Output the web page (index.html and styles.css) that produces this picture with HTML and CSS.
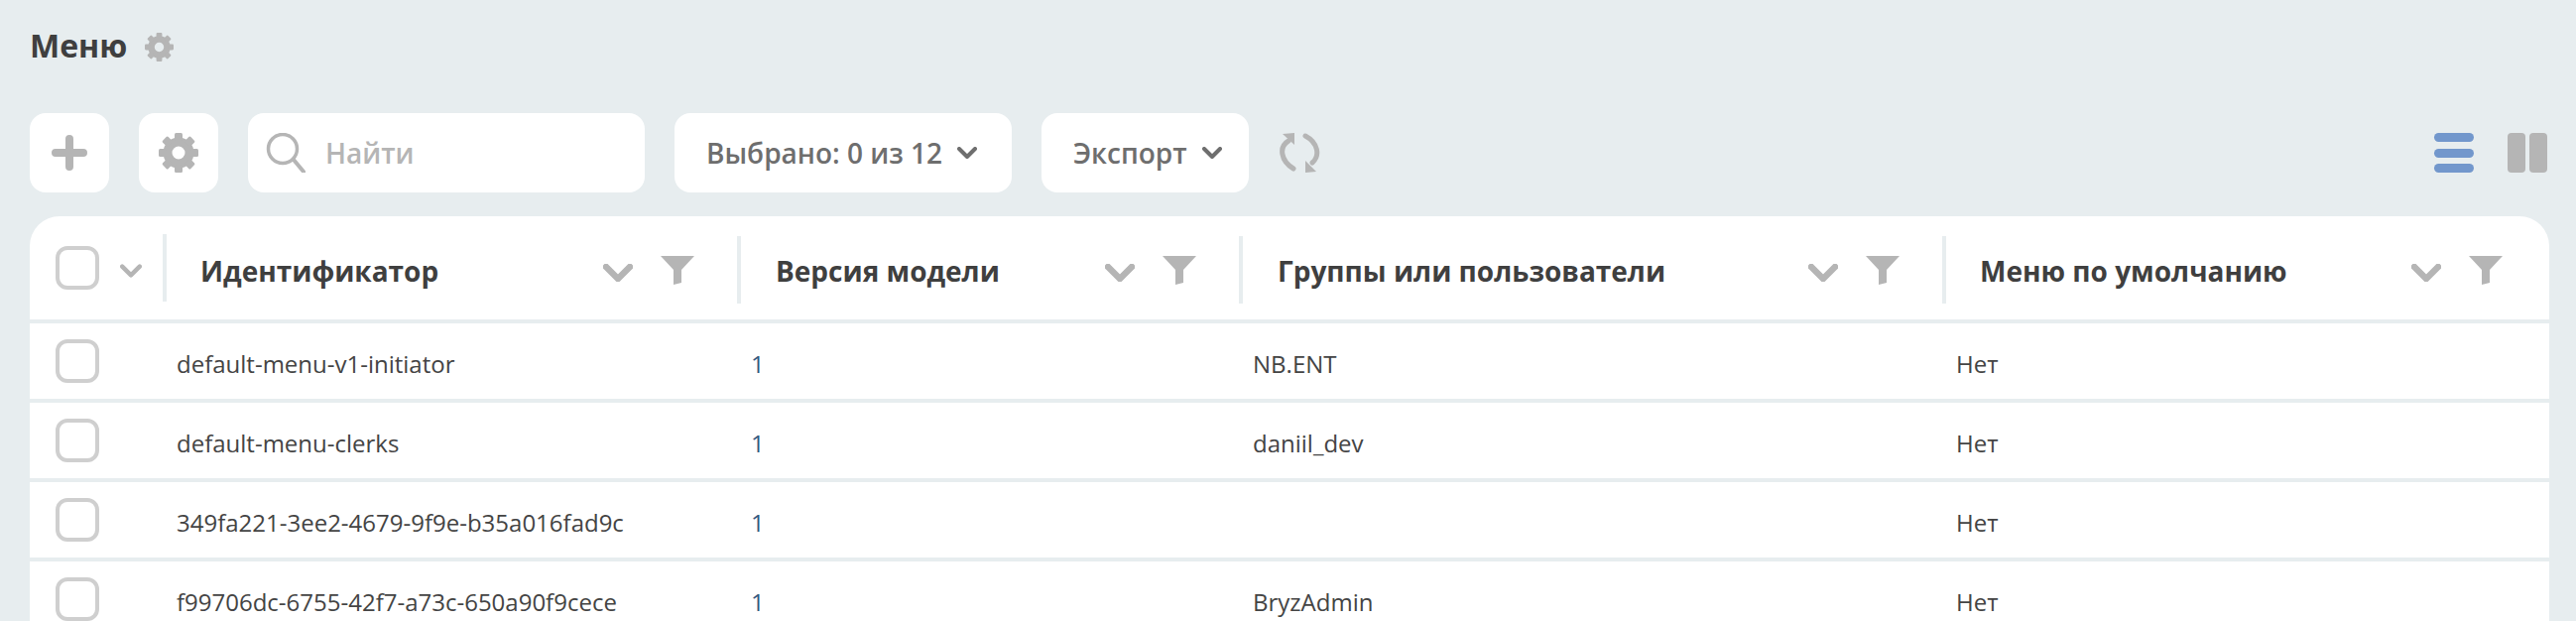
FILE: index.html
```html
<!DOCTYPE html>
<html>

<head>
    <title>Меню</title>
    <link rel="stylesheet" href="styles.css">
</head>

<body>
    <svg class="defs" width="0" height="0">
        <defs>
            <symbol id="gear" viewBox="0 0 40 40">
                <circle cx="20" cy="20" r="11" fill="none" stroke="currentColor" stroke-width="9" />
                <g id="tooth-pair">
                    <rect x="16" y="0" width="8" height="8" rx="1.5" fill="currentColor" />
                    <rect x="16" y="32" width="8" height="8" rx="1.5" fill="currentColor" />
                </g>
                <use href="#tooth-pair" transform="rotate(45 20 20)" />
                <use href="#tooth-pair" transform="rotate(90 20 20)" />
                <use href="#tooth-pair" transform="rotate(135 20 20)" />
            </symbol>
            <symbol id="chevron" viewBox="0 0 30 18">
                <path d="M3 3l12 12L27 3" fill="none" stroke="currentColor" stroke-linecap="round" stroke-linejoin="round" />
            </symbol>
            <symbol id="filter" viewBox="0 0 34 29">
                <path d="M0 0h34L21 14v13l-8 2V14z" fill="currentColor" />
            </symbol>
        </defs>
    </svg>

    <h1 class="page-title">Меню <svg class="title-gear"><use href="#gear" /></svg></h1>

    <div class="toolbar">
        <button class="tool-btn">
            <svg class="icon" viewBox="0 0 40 40">
                <path d="M20 6v28M6 20h28" stroke="currentColor" stroke-width="8" stroke-linecap="round" />
            </svg>
        </button>
        <button class="tool-btn">
            <svg class="icon"><use href="#gear" /></svg>
        </button>
        <div class="search">
            <svg class="icon" viewBox="0 0 40 40">
                <circle cx="17" cy="16" r="14.5" fill="none" stroke="currentColor" stroke-width="3.5" />
                <path d="M28 27l10 12" stroke="currentColor" stroke-width="4" stroke-linecap="round" />
            </svg>
            <span class="search-text">Найти</span>
        </div>
        <button class="drop-btn selected-btn">Выбрано: 0 из 12 <svg class="drop-chevron"><use href="#chevron" /></svg></button>
        <button class="drop-btn export-btn">Экспорт <svg class="drop-chevron"><use href="#chevron" /></svg></button>
        <svg class="icon refresh" viewBox="0 0 42 40">
            <path d="M15 36C2 28 0 14 10 8" fill="none" stroke="currentColor" stroke-width="5" stroke-linecap="round" />
            <path d="M4 1l12-1v12z" fill="currentColor" />
            <path d="M27 3c13 7 15 20 7 27" fill="none" stroke="currentColor" stroke-width="5" stroke-linecap="round" />
            <path d="M27 28v12l11-1z" fill="currentColor" />
        </svg>
        <div class="view-switch">
            <div class="view-list">
                <span></span>
                <span></span>
                <span></span>
            </div>
            <div class="view-columns">
                <span></span>
                <span></span>
            </div>
        </div>
    </div>

    <div class="table">
        <div class="row head">
            <div class="check-cell">
                <span class="checkbox"></span>
                <svg class="head-caret"><use href="#chevron" /></svg>
            </div>
            <div class="head-cell first">
                <span class="head-name">Идентификатор</span>
                <svg class="sort"><use href="#chevron" /></svg>
                <svg class="filter"><use href="#filter" /></svg>
            </div>
            <div class="head-cell">
                <span class="head-name">Версия модели</span>
                <svg class="sort"><use href="#chevron" /></svg>
                <svg class="filter"><use href="#filter" /></svg>
            </div>
            <div class="head-cell">
                <span class="head-name">Группы или пользователи</span>
                <svg class="sort"><use href="#chevron" /></svg>
                <svg class="filter"><use href="#filter" /></svg>
            </div>
            <div class="head-cell last">
                <span class="head-name">Меню по умолчанию</span>
                <svg class="sort"><use href="#chevron" /></svg>
                <svg class="filter"><use href="#filter" /></svg>
            </div>
        </div>
        <div class="row">
            <div class="check-cell"><span class="checkbox"></span></div>
            <div class="cell">default-menu-v1-initiator</div>
            <div class="cell num">1</div>
            <div class="cell">NB.ENT</div>
            <div class="cell">Нет</div>
        </div>
        <div class="row">
            <div class="check-cell"><span class="checkbox"></span></div>
            <div class="cell">default-menu-clerks</div>
            <div class="cell num">1</div>
            <div class="cell">daniil_dev</div>
            <div class="cell">Нет</div>
        </div>
        <div class="row">
            <div class="check-cell"><span class="checkbox"></span></div>
            <div class="cell">349fa221-3ee2-4679-9f9e-b35a016fad9c</div>
            <div class="cell num">1</div>
            <div class="cell"></div>
            <div class="cell">Нет</div>
        </div>
        <div class="row">
            <div class="check-cell"><span class="checkbox"></span></div>
            <div class="cell">f99706dc-6755-42f7-a73c-650a90f9cece</div>
            <div class="cell num">1</div>
            <div class="cell">BryzAdmin</div>
            <div class="cell">Нет</div>
        </div>
    </div>
</body>

</html>
```

FILE: styles.css
```css
html,
body {
    height: 100%;
    overflow: hidden;
}

body {
    margin: 0;
    padding: 0 27px 0 30px;
    box-sizing: border-box;
    background-color: #e7edef;
    color: #3f3f3f;
    font-family: 'Open Sans', sans-serif;
}

.defs {
    position: absolute;
}

.page-title {
    display: flex;
    align-items: center;
    gap: 18px;
    height: 28px;
    margin: 0;
    padding: 32px 0 54px;
    font-size: 32px;
    font-weight: 700;
    line-height: 28px;
}

.title-gear {
    width: 29px;
    height: 29px;
    margin-top: 2px;
    color: #b5b5b5;
}

.toolbar {
    display: flex;
    align-items: center;
    height: 80px;
    margin-bottom: 24px;
}

.toolbar button {
    border: 0;
    padding: 0;
    font-family: inherit;
    cursor: pointer;
}

.icon {
    width: 40px;
    height: 40px;
    color: #b5b5b5;
    flex-shrink: 0;
}

.tool-btn,
.search,
.drop-btn {
    height: 80px;
    border-radius: 16px;
    background-color: #fff;
    display: flex;
    align-items: center;
}

.tool-btn {
    width: 80px;
    justify-content: center;
    margin-right: 30px;
}

.search {
    width: 400px;
    box-sizing: border-box;
    padding-left: 18px;
    margin-right: 30px;
    gap: 20px;
}

.search-text {
    color: #b5b5b5;
    font-size: 28px;
    font-weight: 600;
}

.toolbar .drop-btn {
    gap: 15px;
    padding-left: 32px;
    color: #6e6e6e;
    font-size: 28px;
    font-weight: 600;
}

.selected-btn {
    width: 340px;
    margin-right: 30px;
}

.export-btn {
    width: 209px;
    margin-right: 30px;
}

.drop-chevron {
    width: 20px;
    height: 12px;
    color: #6e6e6e;
    stroke-width: 6;
}

.refresh {
    width: 42px;
}

.view-switch {
    display: flex;
    gap: 34px;
    margin-left: auto;
    padding-right: 2px;
}

.view-list {
    display: flex;
    flex-direction: column;
    justify-content: space-between;
    width: 40px;
    height: 40px;
}

.view-list span {
    height: 9px;
    border-radius: 5px;
    background-color: #7297cc;
}

.view-columns {
    display: flex;
    gap: 4px;
    height: 40px;
}

.view-columns span {
    width: 18px;
    border-radius: 4px;
    background-color: #b5b5b5;
}

.table {
    border-radius: 30px 30px 0 0;
    overflow: hidden;
}

.row {
    display: grid;
    grid-template-columns: 134px 579px 506px 709px 1fr;
    height: 76px;
    margin-bottom: 4px;
    background-color: #fff;
}

.row.head {
    height: 104px;
}

.check-cell {
    display: flex;
    align-items: center;
    padding-left: 26px;
    gap: 21px;
}

.checkbox {
    display: block;
    width: 44px;
    height: 44px;
    box-sizing: border-box;
    border: 4px solid #cfcfcf;
    border-radius: 12px;
}

.head-caret {
    width: 22px;
    height: 14px;
    margin-top: 6px;
    color: #b5b5b5;
    stroke-width: 6;
}

.head-cell {
    display: flex;
    align-items: center;
    box-sizing: border-box;
    height: 68px;
    margin-top: 20px;
    padding: 0 43px 0 35px;
    border-left: 4px solid #e7edef;
}

.head-cell.first {
    margin-top: 18px;
    padding: 4px 43px 0 34px;
}

.head-cell.last {
    padding: 0 47px 0 34px;
}

.head-name {
    flex: 1;
    margin-top: 2px;
    font-size: 28px;
    font-weight: 700;
}

.sort {
    width: 30px;
    height: 18px;
    margin-top: 5px;
    margin-right: 28px;
    color: #b5b5b5;
    stroke-width: 6.5;
}

.filter {
    width: 34px;
    height: 29px;
    margin-top: 1px;
    color: #b5b5b5;
}

.cell {
    display: flex;
    align-items: center;
    padding-left: 14px;
    padding-top: 5px;
    font-size: 24px;
    color: #444;
}

.num {
    color: #34587f;
}
```
